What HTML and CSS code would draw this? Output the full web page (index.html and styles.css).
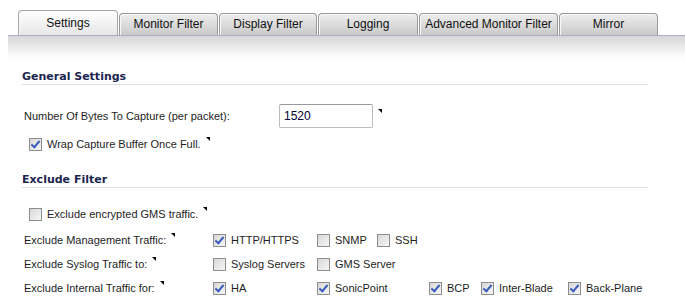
FILE: index.html
```html
<!DOCTYPE html>
<html lang="en">

<head>
    <meta charset="UTF-8">
    <meta name="viewport" content="width=device-width, initial-scale=1.0">
    <title>Packet Monitor Settings</title>
    <link rel="stylesheet" href="styles.css">
</head>

<body>
    <div class="tabs">
        <div class="tab active" style="width: 100px;">Settings</div>
        <div class="tab" style="width: 99px;">Monitor Filter</div>
        <div class="tab" style="width: 98px;">Display Filter</div>
        <div class="tab" style="width: 100px;">Logging</div>
        <div class="tab" style="width: 139px;">Advanced Monitor Filter</div>
        <div class="tab" style="width: 99px;">Mirror</div>
    </div>
    <div class="band"></div>

    <div class="content">
        <div class="section-title first">General Settings</div>

        <div class="row bytes-row">
            <span class="label">Number Of Bytes To Capture (per packet):</span>
            <span class="input-box">1520</span><span class="mark"></span>
        </div>

        <div class="row check-row">
            <span class="cb checked"></span>
            <span class="cb-text">Wrap Capture Buffer Once Full.</span><span class="mark"></span>
        </div>

        <div class="section-title second">Exclude Filter</div>

        <div class="row check-row gms-row">
            <span class="cb"></span>
            <span class="cb-text">Exclude encrypted GMS traffic.</span><span class="mark"></span>
        </div>

        <div class="row opt-row mgmt-row">
            <span class="label-cell">Exclude Management Traffic:<span class="mark"></span></span>
            <span class="opt" style="width: 104px;"><span class="cb checked"></span>HTTP/HTTPS</span>
            <span class="opt" style="width: 60px;"><span class="cb"></span>SNMP</span>
            <span class="opt"><span class="cb"></span>SSH</span>
        </div>

        <div class="row opt-row">
            <span class="label-cell">Exclude Syslog Traffic to:<span class="mark"></span></span>
            <span class="opt" style="width: 104px;"><span class="cb"></span>Syslog Servers</span>
            <span class="opt"><span class="cb"></span>GMS Server</span>
        </div>

        <div class="row opt-row">
            <span class="label-cell">Exclude Internal Traffic for:<span class="mark"></span></span>
            <span class="opt" style="width: 104px;"><span class="cb checked"></span>HA</span>
            <span class="opt" style="width: 112px;"><span class="cb checked"></span>SonicPoint</span>
            <span class="opt" style="width: 52px;"><span class="cb checked"></span>BCP</span>
            <span class="opt" style="width: 87px;"><span class="cb checked"></span>Inter-Blade</span>
            <span class="opt"><span class="cb checked"></span>Back-Plane</span>
        </div>
    </div>
</body>

</html>
```

FILE: styles.css
```css
body {
    margin: 0;
    padding: 0;
    font-family: "Liberation Sans", Arial, sans-serif;
    font-size: 11px;
    color: #1e1e1e;
    background-color: #ffffff;
}

.tabs {
    display: flex;
    align-items: flex-end;
    gap: 1px;
    padding-left: 18px;
    padding-top: 10px;
    height: 25px;
}

.tab {
    box-sizing: border-box;
    height: 22px;
    border: 1px solid #9a9a9a;
    border-bottom: none;
    border-radius: 4px 4px 0 0;
    background: linear-gradient(#eeeeee, #c9c9c9);
    font-size: 12px;
    color: #111111;
    text-align: center;
    line-height: 20px;
    box-shadow: inset 1px 1px 0 #f8f8f8;
}

.tab.active {
    height: 25px;
    line-height: 25px;
    background: linear-gradient(#ffffff, #e6e6e6);
    border-color: #a8a8a8;
}

.band {
    margin-left: 8px;
    height: 22px;
    border-top: 1px solid #a9adc8;
    background: linear-gradient(#d6d6d6, #ffffff);
}

.content {
    padding-left: 22px;
    padding-right: 37px;
}

.section-title {
    height: 16px;
    line-height: 17px;
    font-family: "DejaVu Sans", Verdana, sans-serif;
    font-size: 11px;
    font-weight: bold;
    color: #1b2550;
    border-bottom: 1px solid #dddddd;
}

.section-title.first {
    margin-top: 10px;
}

.section-title.second {
    margin-top: 19px;
}

.row {
    display: flex;
    align-items: center;
    height: 16px;
    line-height: 16px;
    margin-top: 8px;
}

.bytes-row {
    height: 24px;
    margin-top: 19px;
    padding-left: 2px;
}

.bytes-row .label {
    width: 255px;
}

.input-box {
    box-sizing: border-box;
    width: 94px;
    height: 24px;
    border: 1px solid #bbbbbb;
    border-top-color: #999999;
    border-radius: 2px;
    padding-left: 4px;
    font-size: 12px;
    line-height: 22px;
    color: #000033;
}

.mark {
    align-self: flex-start;
    display: inline-block;
    width: 0;
    height: 0;
    margin-left: 5px;
    margin-top: 1px;
    border-top: 4px solid #000000;
    border-left: 4px solid transparent;
}

.bytes-row .mark {
    margin-top: 5px;
}

.check-row {
    padding-left: 7px;
}

.gms-row {
    margin-top: 18px;
}

.mgmt-row {
    margin-top: 10px;
}

.cb {
    box-sizing: border-box;
    display: inline-block;
    flex: none;
    width: 13px;
    height: 13px;
    margin-right: 5px;
    border: 1px solid #8d8d8d;
    background: linear-gradient(135deg, #d8d8d8, #f6f6f6);
    position: relative;
}

.cb.checked::after {
    content: "";
    position: absolute;
    left: 3px;
    top: 0px;
    width: 3px;
    height: 7px;
    border-right: 2px solid #3a5cc0;
    border-bottom: 2px solid #3a5cc0;
    transform: rotate(40deg);
}

.cb-text {
    white-space: nowrap;
}

.opt-row {
    padding-left: 2px;
}

.label-cell {
    display: flex;
    width: 189px;
    white-space: nowrap;
}

.opt {
    display: flex;
    align-items: center;
    white-space: nowrap;
}
```
